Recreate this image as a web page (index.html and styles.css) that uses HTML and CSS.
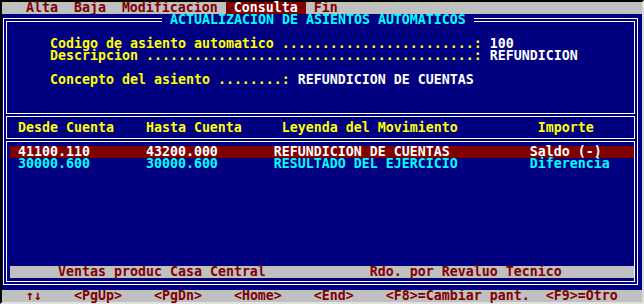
FILE: index.html
```html
<!DOCTYPE html>
<html lang="es">
<head>
    <meta charset="utf-8">
    <title>Actualizacion de asientos automaticos</title>
    <link rel="stylesheet" href="styles.css">
</head>
<body>
    <div class="screen">
        <!-- Barra de menu -->
        <div class="menubar">
            <span class="menu-item">Alta</span>
            <span class="menu-item">Baja</span>
            <span class="menu-item">Modificacion</span>
            <span class="menu-item active">Consulta</span>
            <span class="menu-item">Fin</span>
        </div>

        <!-- Ventana principal -->
        <div class="window">
            <div class="window-title">ACTUALIZACION DE ASIENTOS AUTOMATICOS</div>
            <div class="frame">
                <div class="box head">
                    <div class="line"></div>
                    <div class="line"><span class="label">Codigo de asiento automatico ........................:</span> <span class="value">100</span></div>
                    <div class="line"><span class="label">Descripcion .........................................:</span> <span class="value">REFUNDICION</span></div>
                    <div class="line"></div>
                    <div class="line"><span class="label">Concepto del asiento ........:</span> <span class="value">REFUNDICION DE CUENTAS</span></div>
                    <div class="line"></div>
                    <div class="line"></div>
                </div>

                <div class="box colhead">
                    <div class="row header">
                        <span>Desde Cuenta</span>
                        <span>Hasta Cuenta</span>
                        <span class="shift">Leyenda del Movimiento</span>
                        <span class="shift">Importe</span>
                    </div>
                </div>

                <div class="box data">
                    <div class="row selected">
                        <span>41100.110</span>
                        <span>43200.000</span>
                        <span>REFUNDICION DE CUENTAS</span>
                        <span>Saldo (-)</span>
                    </div>
                    <div class="row">
                        <span>30000.600</span>
                        <span>30000.600</span>
                        <span>RESULTADO DEL EJERCICIO</span>
                        <span>Diferencia</span>
                    </div>
                    <div class="status">
                        <span class="status-left">Ventas produc Casa Central</span>
                        <span>Rdo. por Revaluo Tecnico</span>
                    </div>
                </div>
            </div>
        </div>

        <!-- Teclas -->
        <div class="keys">   ↑↓    &lt;PgUp&gt;    &lt;PgDn&gt;    &lt;Home&gt;    &lt;End&gt;    &lt;F8&gt;=Cambiar pant.  &lt;F9&gt;=Otro</div>
    </div>
</body>
</html>
```

FILE: styles.css
```css
body {
    margin: 0;
    padding: 0;
    background-color: rgb(192, 192, 192);
}
.screen {
    width: 640px;
    height: 300px;
    border-style: solid;
    border-width: 2px;
    border-color: rgb(0, 0, 0) rgb(224, 224, 224) rgb(224, 224, 224) rgb(0, 0, 0);
    font-family: 'DejaVu Sans Mono', monospace;
    font-weight: bold;
    font-size: 13.29px;
    line-height: 12px;
    display: flex;
    flex-direction: column;
}

/* barra de menu */
.menubar {
    height: 12px;
    display: flex;
    padding-left: 2ch;
    background-color: rgb(192, 192, 192);
    color: rgb(128, 0, 0);
}
.menu-item {
    padding: 0 1ch;
}
.menu-item.active {
    background-color: rgb(128, 0, 0);
    color: rgb(255, 255, 255);
}

/* ventana */
.window {
    position: relative;
    box-sizing: border-box;
    height: 276px;
    padding: 4px 4px 5px 1px;
    background-color: rgb(0, 0, 128);
    display: flex;
    flex-direction: column;
}
.window-title {
    position: absolute;
    top: 0;
    left: 160px;
    height: 12px;
    padding: 0 1ch;
    background-color: rgb(0, 0, 128);
    color: rgb(0, 255, 255);
}
.frame {
    flex: 1;
    border: 1px solid rgb(255, 255, 255);
    padding: 2px;
    display: flex;
    flex-direction: column;
    gap: 2px;
}
.box {
    border: 1px solid rgb(255, 255, 255);
    padding-left: 3px;
}
.head {
    padding-top: 4px;
    padding-bottom: 3px;
}
.line {
    height: 12px;
    padding-left: 5ch;
    white-space: pre;
}
.label {
    color: rgb(255, 255, 0);
}
.value {
    color: rgb(255, 255, 255);
}

.colhead {
    padding-top: 5px;
    padding-bottom: 4px;
}
.row {
    height: 12px;
    padding-left: 1ch;
    display: grid;
    grid-template-columns: 16ch 16ch 32ch auto;
    white-space: pre;
    color: rgb(0, 255, 255);
}
.row.header {
    color: rgb(255, 255, 0);
}
.row .shift {
    padding-left: 1ch;
}
.row.selected {
    background-color: rgb(128, 0, 0);
    color: rgb(255, 255, 255);
}

.data {
    flex: 1;
    padding-top: 4px;
    padding-bottom: 3px;
    display: flex;
    flex-direction: column;
}
.status {
    margin-top: auto;
    height: 12px;
    padding-left: 6ch;
    display: flex;
    background-color: rgb(192, 192, 192);
    color: rgb(128, 0, 0);
}
.status-left {
    width: 39ch;
}

/* teclas */
.keys {
    height: 12px;
    white-space: pre;
    background-color: rgb(192, 192, 192);
    color: rgb(128, 0, 0);
}
```
